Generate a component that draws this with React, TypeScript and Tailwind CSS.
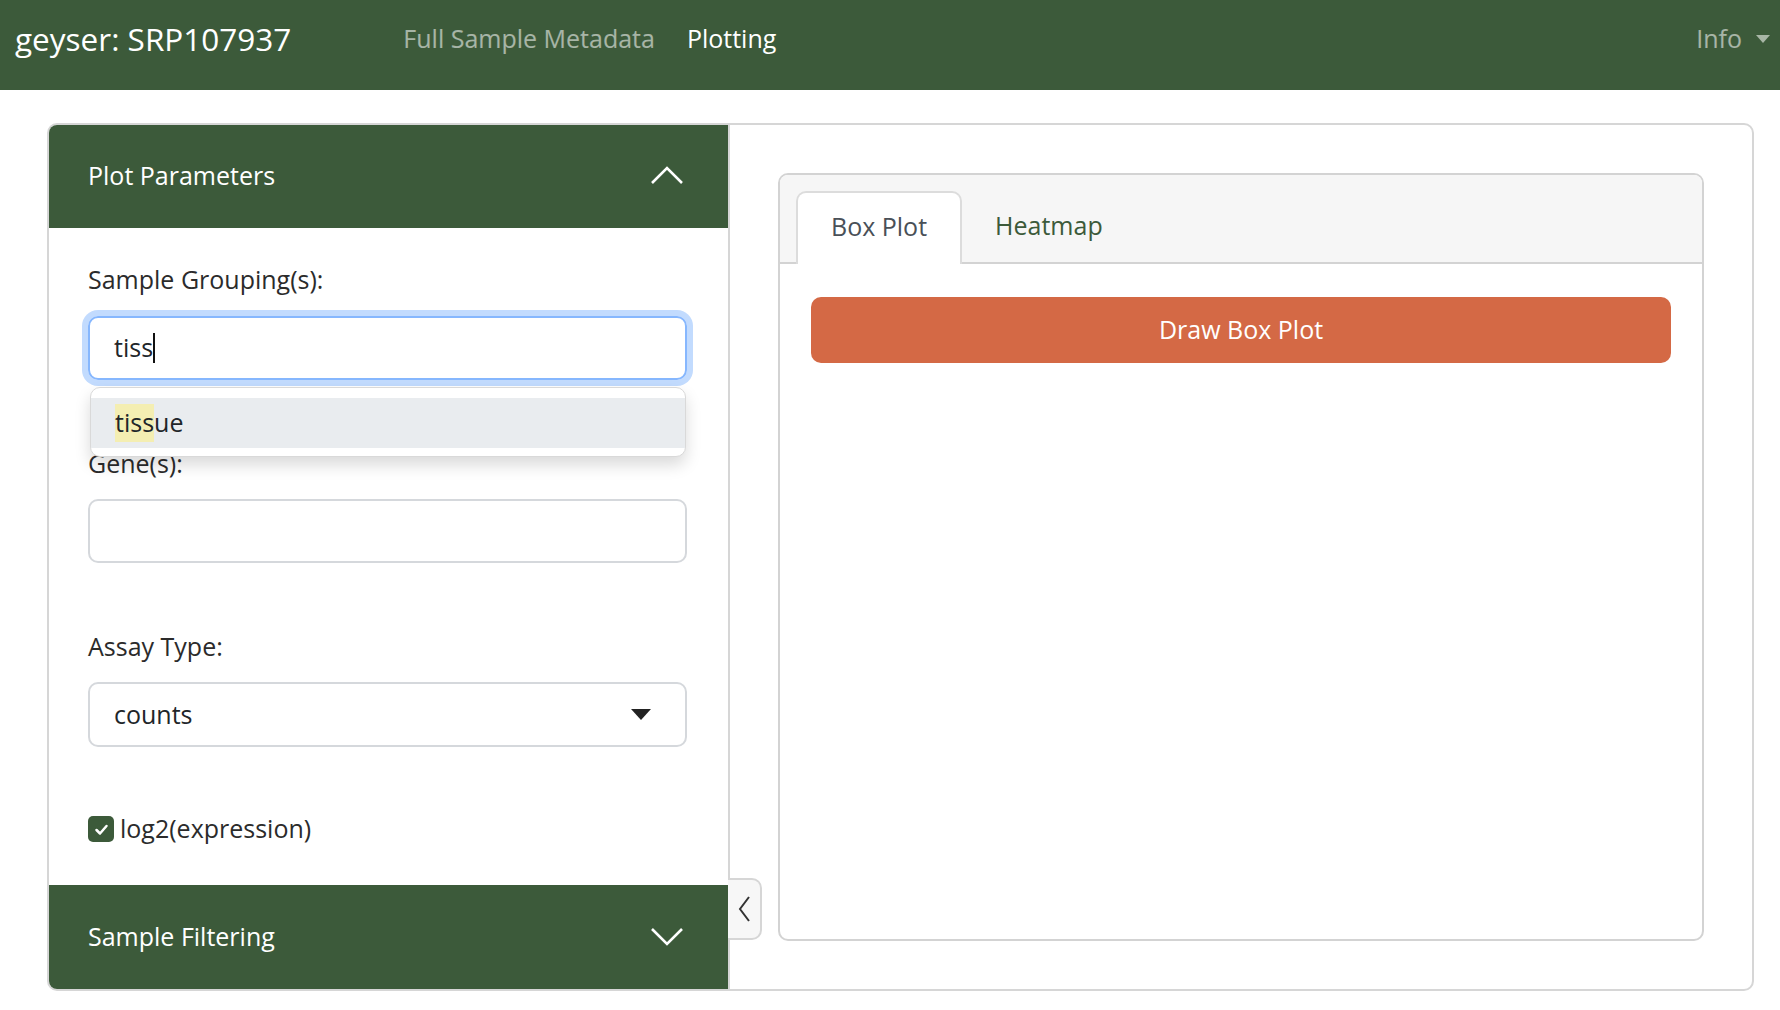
import React from 'react';

function ChevronUp() {
  return (
    <svg width="34" height="20" viewBox="0 0 34 20" fill="none">
      <polyline points="2,17 17,2 32,17" stroke="white" strokeWidth="2.6" />
    </svg>
  );
}

function ChevronDown() {
  return (
    <svg width="34" height="20" viewBox="0 0 34 20" fill="none">
      <polyline points="2,2 17,17 32,2" stroke="white" strokeWidth="2.6" />
    </svg>
  );
}

export default function App() {
  return (
    <div className="min-h-[1010px] w-[1780px] bg-white font-['Open_Sans',sans-serif] text-[#2b2b2b]">
      {/* Navbar */}
      <nav className="h-[90px] bg-[#3c5a3a] flex items-center pl-[15px] pr-[10px] pb-[12px]">
        <span className="text-[31.5px] text-white mr-[112px]">geyser: SRP107937</span>
        <a className="text-[25px] text-white/55">Full Sample Metadata</a>
        <a className="text-[25px] text-white ml-[32px]">Plotting</a>
        <div className="ml-auto flex items-center gap-[14px] text-[25px] text-white/55">
          <span>Info</span>
          <span className="w-0 h-0 border-l-[7px] border-r-[7px] border-t-[8px] border-l-transparent border-r-transparent border-t-[#a8b6a6]"></span>
        </div>
      </nav>

      {/* Main card */}
      <div className="pl-[47px] pr-[26px] pt-[33px]">
        <div className="relative h-[868px] border-2 border-[#d6d6d6] rounded-[10px] flex overflow-hidden">
          {/* Sidebar */}
          <div className="w-[681px] border-r-2 border-[#d6d6d6] flex flex-col">
            <div className="h-[103px] bg-[#3c5a3a] flex items-center justify-between pl-[39px] pr-[44px] pb-[2px]">
              <span className="text-[25px] text-white">Plot Parameters</span>
              <ChevronUp />
            </div>

            <div className="relative flex-1 flex flex-col pl-[39px] pr-[41px] text-[25px]">
              <div className="pt-[32px] leading-[38px]">Sample Grouping(s):</div>
              <div className="mt-[18px] h-[64px] border-2 border-[#86b7fe] rounded-[10px] shadow-[0_0_0_6px_rgba(13,110,253,0.25)] flex items-center pl-[24px] text-[#212529]">
                <span>tiss</span>
                <span className="w-[2px] h-[30px] bg-[#111]"></span>
              </div>

              <div className="mt-[64px] leading-[38px]">Gene(s):</div>
              <div className="mt-[17px] h-[64px] border-2 border-[#d5d8dc] rounded-[10px]"></div>

              <div className="mt-[64px] leading-[38px]">Assay Type:</div>
              <div className="mt-[17px] h-[65px] border-2 border-[#d5d8dc] rounded-[10px] flex items-center justify-between pl-[24px] pr-[34px] text-[#212529]">
                <span>counts</span>
                <span className="w-0 h-0 border-l-[10px] border-r-[10px] border-t-[11px] border-l-transparent border-r-transparent border-t-[#222]"></span>
              </div>

              <div className="mt-[63px] h-[38px] flex items-center gap-[6px]">
                <span className="w-[26px] h-[26px] rounded-[5px] bg-[#3c5a3a] flex items-center justify-center">
                  <svg width="15" height="13" viewBox="0 0 15 13" fill="none">
                    <polyline points="2.5,7 6,10.5 12.5,3" stroke="white" strokeWidth="2.5" strokeLinecap="round" strokeLinejoin="round" />
                  </svg>
                </span>
                <span>log2(expression)</span>
              </div>

              {/* Autocomplete dropdown */}
              <div className="absolute left-[41px] top-[159px] w-[596px] h-[70px] bg-white border border-[#d9d9d9] rounded-[10px] shadow-[0_8px_16px_rgba(0,0,0,0.15)] py-[10px]">
                <div className="h-[50px] bg-[#e9ecef] flex items-center pl-[24px] text-[#212529]">
                  <span className="bg-[#f4eeb2]">tiss</span>
                  <span>ue</span>
                </div>
              </div>
            </div>

            <div className="h-[104px] bg-[#3c5a3a] flex items-center justify-between pl-[39px] pr-[44px]">
              <span className="text-[25px] text-white">Sample Filtering</span>
              <ChevronDown />
            </div>
          </div>

          {/* Collapse toggle */}
          <div className="absolute left-[679px] top-[753px] w-[34px] h-[62px] bg-[#f7f7f7] border-2 border-l-0 border-[#d6d6d6] rounded-r-[10px] flex items-center justify-center">
            <svg width="14" height="28" viewBox="0 0 14 28" fill="none">
              <polyline points="12,2 3,14 12,26" stroke="#333" strokeWidth="2" />
            </svg>
          </div>

          {/* Content */}
          <div className="flex-1 p-[48px]">
            <div className="h-full border-2 border-[#d3d3d3] rounded-[10px] flex flex-col overflow-hidden">
              <div className="h-[89px] bg-[#f6f6f6] border-b-2 border-[#d3d3d3] flex items-end pl-[16px]">
                <div className="h-[73px] -mb-[2px] bg-white border-2 border-b-0 border-[#dcdcdc] rounded-t-[10px] px-[33px] pb-[4px] flex items-center text-[25px] text-[#495057]">
                  Box Plot
                </div>
                <div className="h-[73px] px-[33px] flex items-center text-[25px] text-[#3c5a3a]">Heatmap</div>
              </div>
              <div className="flex-1 px-[31px] pt-[33px]">
                <button className="w-full h-[66px] rounded-[10px] bg-[#d46945] text-white text-[25px]">Draw Box Plot</button>
              </div>
            </div>
          </div>
        </div>
      </div>
    </div>
  );
}
